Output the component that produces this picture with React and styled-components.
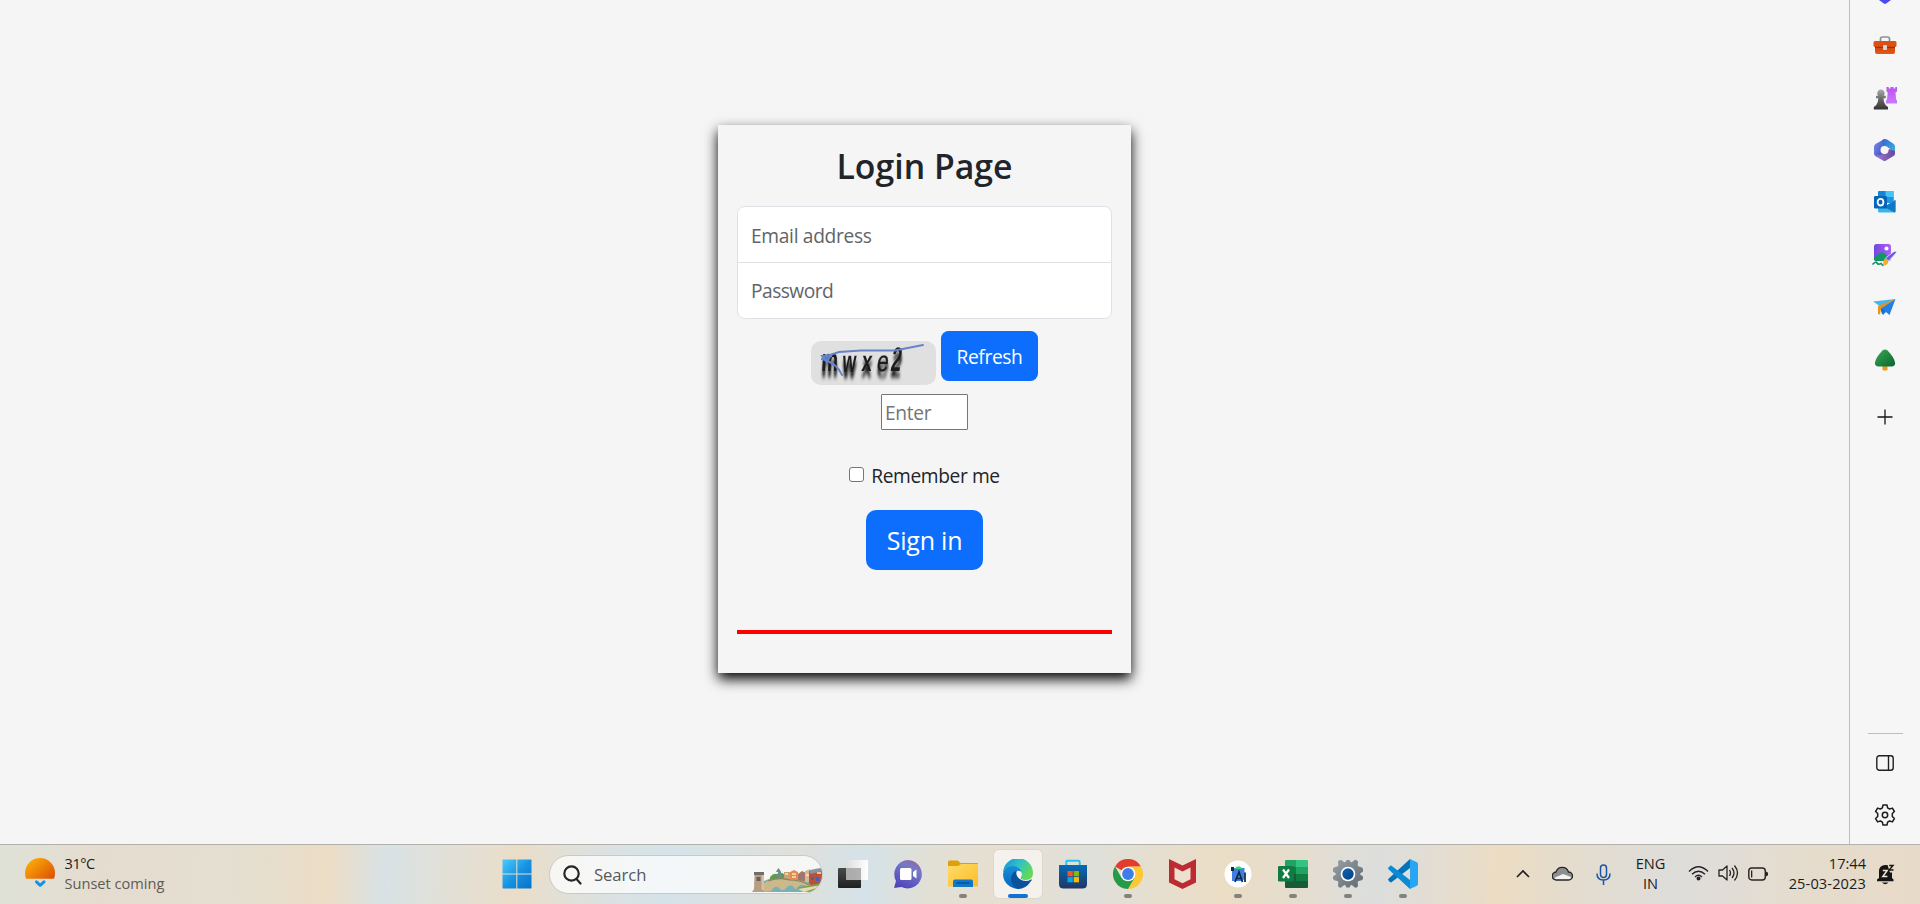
import React from "react";
import styled, { createGlobalStyle } from "styled-components";

const GlobalStyle = createGlobalStyle`
  *, *::before, *::after { box-sizing: border-box; }
  html, body, #root { height: 100%; margin: 0; }
  body {
    background: #f5f5f5;
    color: #212529;
    font-family: "Open Sans", "Noto Sans", sans-serif;
    letter-spacing: -0.019em;
    overflow: hidden;
  }
  input, button { font: inherit; letter-spacing: inherit; margin: 0; }
  svg { display: block; }
`;

const Desktop = styled.div`
  display: flex;
  flex-direction: column;
  width: 1920px;
  height: 904px;
`;

const BrowserWindow = styled.div`
  display: flex;
  flex: 1;
  min-height: 0;
`;

const Page = styled.main`
  display: flex;
  flex: 1;
  justify-content: center;
  align-items: flex-start;
  padding-top: 125px;
  background: #f5f5f5;
`;

/* ---------- login form ---------- */

const Card = styled.form`
  display: flex;
  flex-direction: column;
  align-items: center;
  width: 413px;
  height: 548px;
  padding: 20px 19px 0;
  background: #f5f5f5;
  box-shadow: 0 6.25px 12.5px #000;
`;

const Title = styled.h1`
  margin: 0 0 19px;
  font-size: 33.8px;
  font-weight: 600;
  letter-spacing: 0;
  line-height: 42px;
`;

const FieldGroup = styled.div`
  display: flex;
  flex-direction: column;
  align-self: stretch;
`;

const Field = styled.input`
  height: 57px;
  padding: ${(p) => (p.$last ? "0 13px 1px" : "1px 13px 0")};
  border: 1px solid #dee2e6;
  border-radius: ${(p) => (p.$last ? "0 0 7.5px 7.5px" : "7.5px 7.5px 0 0")};
  margin-top: ${(p) => (p.$last ? "-1px" : "0")};
  background: #fff;
  font-size: 19.2px;
  letter-spacing: ${(p) => (p.$last ? "-0.028em" : "-0.017em")};
  outline: none;
  &::placeholder { color: #5f6468; opacity: 1; }
`;

const CaptchaRow = styled.div`
  display: flex;
  align-items: flex-start;
  gap: 5px;
  height: 54px;
  margin-top: 12px;
`;

const CaptchaBox = styled.div`
  width: 125px;
  height: 44px;
  margin-top: 10px;
  border-radius: 10px;
  background: #e0e0e0;
  overflow: hidden;
`;

const Button = styled.button`
  width: ${(p) => (p.$large ? 117 : 97)}px;
  height: ${(p) => (p.$large ? 60 : 50)}px;
  padding: ${(p) => (p.$large ? "0" : "1px")} 0 0;
  border: 0;
  border-radius: ${(p) => (p.$large ? 10 : 7.5)}px;
  background: #0d6efd;
  color: #fff;
  font-size: ${(p) => (p.$large ? 25 : 19.2)}px;
  letter-spacing: ${(p) => (p.$large ? "-0.008em" : "-0.019em")};
  white-space: nowrap;
`;

const CaptchaInput = styled.input`
  width: 87px;
  height: 36px;
  margin-top: 9px;
  padding: 1px 3px 0;
  border: 1px solid #767676;
  border-radius: 1px;
  background: #fff;
  font-size: 19.2px;
  outline: none;
  &::placeholder { color: #757575; opacity: 1; }
`;

const Remember = styled.label`
  display: flex;
  align-items: center;
  gap: 7px;
  height: 30px;
  margin: 30px 0 20px;
  font-size: 19.2px;
  line-height: 30px;
`;

const RememberText = styled.span`
  padding-top: 2px;
  letter-spacing: -0.021em;
`;

const Checkbox = styled.input`
  appearance: none;
  width: 15px;
  height: 15px;
  margin: 0 0 1px;
  border: 1px solid #767676;
  border-radius: 3px;
  background: #fff;
`;

const Rule = styled.div`
  align-self: stretch;
  height: 4px;
  margin-top: 60px;
  background: #f00;
`;

/* ---------- browser sidebar ---------- */

const Sidebar = styled.aside`
  display: flex;
  flex-direction: column;
  justify-content: space-between;
  width: 71px;
  border-left: 1px solid #bdbdbd;
  background: #f6f6f6;
  overflow: hidden;
`;

const SideGroup = styled.div`
  display: flex;
  flex-direction: column;
  align-items: center;
  padding-bottom: ${(p) => p.$bottom || 0}px;
`;

const SideSlot = styled.div`
  display: flex;
  align-items: center;
  justify-content: center;
  width: 36px;
  height: ${(p) => p.$h || 52.4}px;
  padding-right: 1px;
`;

const SideDivider = styled.div`
  width: 35px;
  height: 1px;
  background: #bdbdbd;
`;

/* ---------- taskbar ---------- */

const Taskbar = styled.footer`
  display: flex;
  height: 60px;
  border-top: 1px solid #b3b1ac;
  color: #1c1c1c;
  font-size: 14.6px;
  letter-spacing: 0;
  background: linear-gradient(
    93deg,
    #dfe2d8 0px, #e5dccf 100px, #e3dfd0 240px, #ecdcc5 330px, #d8e2e5 385px,
    #e0e1db 430px, #eaddc8 520px, #dfe1dc 580px, #d5e3ea 665px, #dfe0da 790px,
    #d5e2e8 865px, #e2e0d6 930px, #e7dfd0 1000px, #dfe0da 1090px,
    #ebddc5 1220px, #e6ddcd 1290px, #dcdedd 1375px, #e2ddd3 1430px,
    #ecdcc3 1500px, #e3dccf 1580px, #dedddb 1680px, #e5dccd 1800px,
    #e8dac8 1920px
  );
`;

const Weather = styled.div`
  display: flex;
  width: 494px;
  padding: 10px 0 0 25px;
  gap: 9.5px;
`;

const Lines = styled.div`
  display: flex;
  flex-direction: column;
  align-items: ${(p) => p.$align || "flex-start"};
  margin-top: -2px;
  line-height: 20px;
  white-space: nowrap;
`;

const Temperature = styled.span`
  letter-spacing: -0.03em;
`;

const Muted = styled.span`
  color: #5e5b56;
  letter-spacing: 0;
`;

const Digits = styled.span`
  letter-spacing: ${(p) => p.$spacing || 0}px;
`;

const StartSlot = styled.div`
  display: flex;
  justify-content: center;
  width: 45px;
  padding-top: 14px;
`;

const SearchBox = styled.div`
  display: flex;
  align-items: center;
  width: 274px;
  height: 39px;
  margin: 10px 2px 0 10px;
  padding-left: 13px;
  border: 1px solid #c9cac6;
  border-radius: 20px;
  background: rgba(255, 255, 255, 0.72);
  color: #56585a;
  font-size: 16.7px;
  overflow: hidden;
`;

const SearchLabel = styled.span`
  flex: 1;
  margin-left: 12px;
  line-height: 24px;
  letter-spacing: -0.005em;
`;

const SearchArt = styled.div`
  margin: 1px -1px 0 0;
`;

const AppSlot = styled.div`
  display: flex;
  flex-direction: column;
  align-items: center;
  width: 55px;
  padding-top: 5px;
`;

const AppTile = styled.div`
  display: flex;
  align-items: center;
  justify-content: center;
  width: 48px;
  height: 48px;
  border-radius: 5px;
  background: ${(p) => (p.$active ? "rgba(247, 245, 241, 0.85)" : "transparent")};
  box-shadow: ${(p) => (p.$active ? "0 0 0 1px rgba(205, 200, 190, .35)" : "none")};
`;

const Indicator = styled.i`
  width: ${(p) => (p.$active ? 20 : 8)}px;
  height: 4px;
  margin-top: -4px;
  border-radius: 2px;
  background: ${(p) => (p.$active ? "#0c74d4" : p.$running ? "#84827c" : "transparent")};
`;

const Tray = styled.div`
  display: flex;
  flex: 1;
  justify-content: flex-end;
  padding-right: 26px;
`;

const TraySlot = styled.div`
  width: ${(p) => p.$w}px;
  margin-right: ${(p) => p.$gap || 0}px;
  padding-top: ${(p) => p.$top}px;
`;

/* ---------- icons ---------- */

const CaptchaArt = () => (
  <svg width="125" height="44" viewBox="0 0 125 44">
    <defs>
      <filter id="smear" filterUnits="userSpaceOnUse" x="0" y="0" width="125" height="44">
        <feGaussianBlur in="SourceAlpha" stdDeviation="1 2.6" result="b" />
        <feOffset in="b" dy="6" result="shade" />
        <feGaussianBlur in="SourceGraphic" stdDeviation="0.35" result="glyph" />
        <feMerge><feMergeNode in="shade" /><feMergeNode in="glyph" /></feMerge>
      </filter>
    </defs>
    <g fill="#1c1c1c" filter="url(#smear)" fontFamily="Liberation Sans, sans-serif" fontWeight="700" letterSpacing="0">
      <text transform="translate(10 30) skewX(-3) scale(.58 1)" fontSize="32">m</text>
      <text transform="translate(31 30.500) skewX(-4) scale(.56 1)" fontSize="31">w</text>
      <text transform="translate(50 30) skewX(-6) scale(.64 1)" fontSize="29">x</text>
      <text transform="translate(65 30) skewX(-8) scale(.72 1)" fontSize="29" fontWeight="400" stroke="#1c1c1c" strokeWidth=".4">e</text>
      <text transform="translate(79 30) skewX(-8) scale(.54 1)" fontSize="34">2</text>
    </g>
    <g fill="none" stroke="#6583c9" strokeWidth="1.900" strokeLinecap="round">
      <path d="M112 4L84 9.500H50L28 11Q20 13 11 18" />
      <path d="M11 18Q26 22 31 34" />
      <path d="M11 15l9-1-4 7z" fill="#5b7cc8" />
    </g>
  </svg>
);

const Gem = () => (
  <svg width="24" height="20" viewBox="0 0 24 20"><path d="M6 0h12l-4.500 3.200q-1.500 1.300-3 0z" fill="#4a48f5" /></svg>
);

const Toolbox = () => (
  <svg width="24" height="20" viewBox="0 0 24 20">
    <defs><linearGradient id="tb" x2="0" y2="1"><stop stopColor="#c94108" /><stop offset="1" stopColor="#e5581b" /></linearGradient></defs>
    <path d="M7.500 7V4q0-2 2-2h5q2 0 2 2v3" fill="none" stroke="#8a9191" strokeWidth="1.700" />
    <path d="M2 10h20v7q0 2-2 2H4q-2 0-2-2z" fill="url(#tb)" />
    <rect x=".5" y="6" width="23" height="6" rx="1.500" fill="#dd5011" />
    <path d="M2 11.800h20v1.200H2z" fill="#9c320a" />
    <rect x="10" y="10" width="4" height="5" rx="1" fill="#d4d7d7" />
  </svg>
);

const Chess = () => (
  <svg width="24" height="24" viewBox="0 0 24 24">
    <defs>
      <linearGradient id="pawn" x2="0" y2="1"><stop stopColor="#aaa" /><stop offset=".5" stopColor="#666" /><stop offset="1" stopColor="#333" /></linearGradient>
      <linearGradient id="rook" x2="0" y2="1"><stop stopColor="#b954ee" /><stop offset="1" stopColor="#cc78ff" /></linearGradient>
    </defs>
    <path d="M13.500 1h2.200v1.500h1.800V1h3v1.500h1.800V1H24v4.500L22.500 6.500l.6 7 .9 1v3H13v-3l1-1 .7-7-1.200-1z" fill="url(#rook)" />
    <path d="M8 3.500a3.700 3.700 0 0 1 2.700 6.200h2.100v2.500h-2.300q0 4.500 2.200 7l2.300 1.800v2.500H.8V21l2.300-1.800q2.200-2.500 2.200-7H3V9.700h2.200A3.700 3.700 0 0 1 8 3.500z" fill="url(#pawn)" />
  </svg>
);

const M365 = () => (
  <svg width="23" height="24" viewBox="0 0 23 24">
    <defs>
      <linearGradient id="ma" x2="1" y2="1"><stop stopColor="#7d8ff0" /><stop offset="1" stopColor="#3944af" /></linearGradient>
      <linearGradient id="mb" x2="1" y2="1"><stop stopColor="#3c63c9" /><stop offset="1" stopColor="#38b9e9" /></linearGradient>
      <linearGradient id="mc" x2="1" y2="0"><stop stopColor="#a877d2" /><stop offset="1" stopColor="#66499b" /></linearGradient>
    </defs>
    <path d="M11.500 1L2.500 6Q1 7 1 8.500v7Q1 17 2.500 18l8 3V5z" fill="url(#ma)" />
    <path d="M9 2.300Q11.500.2 14 1.500l6.500 4.300Q22 7 22 8.500V15l-6-5-7-1z" fill="url(#mb)" />
    <path d="M22 13v2.500q0 1.500-1.500 2.500L13 22.500q-1.500 1-3 0l-7-4Q2 18 1.500 17q4 1.500 8-1l7-5z" fill="url(#mc)" />
    <circle cx="11.500" cy="12" r="4" fill="#f6f6f6" />
  </svg>
);

const Outlook = () => (
  <svg width="22" height="22" viewBox="0 0 22 22">
    <path d="M4 1q0-1 1-1h14.500v12H4z" fill="#1286d2" />
    <path d="M11.500 0h8v6h-8z" fill="#45c3f2" /><path d="M11.500 6h8v6h-8z" fill="#2095df" />
    <path d="M4 10l9 4 8.500-5v11q0 1.500-1.500 1.500H5.500Q4 21.500 4 20z" fill="#35b7ea" />
    <path d="M10 16l11.500-7v11q0 1-.7 1.500z" fill="#1477c4" />
    <rect y="5" width="13" height="12.500" rx="1.300" fill="#0765b8" />
    <ellipse cx="6.500" cy="11.200" rx="2.900" ry="3.300" fill="none" stroke="#fff" strokeWidth="1.800" />
  </svg>
);

const ImageCreator = () => (
  <svg width="25" height="24" viewBox="0 0 25 24">
    <defs><linearGradient id="ic" x2="1"><stop stopColor="#7248de" /><stop offset="1" stopColor="#ad62f6" /></linearGradient></defs>
    <rect x="2" y="1" width="17" height="17" rx="2.500" fill="url(#ic)" />
    <path d="M2 14l6-4q2-1.500 4 0l5 4-3 4H4.500Q2 18 2 15.500z" fill="#139568" />
    <circle cx="14.500" cy="5.500" r="2" fill="#fff" />
    <path d="M.5 19.500h12V24H.5z" fill="#f6f6f6" />
    <path d="M1 21q3-3 4-1t4 .5l2 2" fill="none" stroke="#129365" strokeWidth="1.700" strokeLinecap="round" />
    <path d="M22 8.500q2-.8 2.500.7-.5 1.300-8 8.800l-3-3z" fill="#6a5ce8" stroke="#f6f6f6" strokeWidth=".7" />
    <path d="M13 15.500l3.500 3q-.5 4-6 4.200 1-1 .7-3 .2-3 1.800-4.200z" fill="#f5ae25" />
  </svg>
);

const PaperPlane = () => (
  <svg width="23" height="18" viewBox="0 0 23 18">
    <path d="M0 3.500L22.500 1 8 9z" fill="#47b5f3" />
    <path d="M22.500 1L16.500 17l-3.500-3-3 3-3-7z" fill="#237ee6" />
    <path d="M22.500 1L5 8v8l2 .5 1-6z" fill="#e99412" />
    <path d="M8 10.500l1 6 3-4z" fill="#1969c8" />
  </svg>
);

const Tree = () => (
  <svg width="22" height="22" viewBox="0 0 22 22">
    <defs><linearGradient id="tr" x2="1" y2="1"><stop stopColor="#3dab55" /><stop offset="1" stopColor="#07642f" /></linearGradient></defs>
    <path d="M8.500 15h5v6q-2.500 1-5 0z" fill="#eb9920" />
    <path d="M8.500 1.500Q11-.6 13.500 1.500 20 8 21 13.500 21.500 17.500 17.500 17.500h-13Q.5 17.500 1 13.500 2 8 8.500 1.500z" fill="url(#tr)" />
  </svg>
);

const Plus = () => (
  <svg width="16" height="16" viewBox="0 0 16 16"><path d="M8 .5v15M.5 8h15" stroke="#151515" strokeWidth="1.300" /></svg>
);

const PanelIcon = () => (
  <svg width="18" height="16" viewBox="0 0 18 16" fill="none" stroke="#202020" strokeWidth="1.400">
    <rect x=".8" y=".8" width="16.400" height="14.400" rx="2.500" /><path d="M12.500 1v14" />
  </svg>
);

const Gear = () => (
  <svg width="22" height="22" viewBox="0 0 22 22" fill="none" stroke="#1d1d1d" strokeWidth="1.500" strokeLinejoin="round">
    <path d="M9 1h4l.6 2.800 2 1.200 2.800-.9 2 3.400L18.300 9.500v3l2.100 2-2 3.400-2.800-.9-2 1.200L13 21H9l-.6-2.800-2-1.200-2.800.9-2-3.400 2.100-2v-3l-2.100-2 2-3.400 2.800.9 2-1.200z" />
    <circle cx="11" cy="11" r="2.700" />
  </svg>
);

const Sunset = () => (
  <svg width="30" height="32" viewBox="0 0 30 32">
    <defs><linearGradient id="sun" x1="0" y1="0" x2="1" y2=".8"><stop stopColor="#fbb507" /><stop offset=".4" stopColor="#f39208" /><stop offset="1" stopColor="#df5604" /></linearGradient></defs>
    <path d="M1 23.800Q0 21 0 18a15 15 0 0 1 30 0q0 3-1 5.800z" fill="url(#sun)" />
    <path d="M11.500 26.800l3.700 3.500 3.800-3.500" fill="none" stroke="#1594e4" strokeWidth="3" strokeLinecap="round" strokeLinejoin="round" />
  </svg>
);

const WindowsLogo = () => (
  <svg width="30" height="30" viewBox="0 0 30 30">
    <defs><linearGradient id="win" gradientUnits="userSpaceOnUse" x1="0" y1="0" x2="30" y2="30"><stop stopColor="#4dcdfd" /><stop offset=".5" stopColor="#1794e2" /><stop offset="1" stopColor="#0670ca" /></linearGradient></defs>
    <path d="M1 .5h13.300v14H.5V1zM15.300.5H29l.5.5v13.500H15.300zM.5 15.500h13.800v14H1l-.5-.5zM15.300 15.500h14.200V29l-.5.5H15.300z" fill="url(#win)" />
  </svg>
);

const Magnifier = () => (
  <svg width="19" height="20" viewBox="0 0 19 20" fill="none" stroke="#262626" strokeWidth="2.200" strokeLinecap="round">
    <circle cx="8.500" cy="8.500" r="7.200" /><path d="M13.500 14l4 4.500" />
  </svg>
);

const CityArt = () => (
  <svg width="71" height="37" viewBox="0 0 71 37">
    <path d="M12 35V24l12-5 47 1v15z" fill="#78b0b5" />
    <path d="M18 20q3-4 7-3 3-3 7 0 8-3 14 0l-2 8H18z" fill="#5f9a53" />
    <path d="M26 20v-5h-2l1-2 1.500-2 1.500 2 1 2v5z" fill="#69908a" />
    <path d="M32 15h7v7h-7z" fill="#c9a26d" /><path d="M38 15l4-2 4 2v8h-8z" fill="#e58b52" />
    <path d="M46 17l4-3 4 2v8h-8z" fill="#9f786d" /><path d="M53 14l5-2v13h-5z" fill="#d9b792" />
    <path d="M57 14l14-2v17H57z" fill="#b7533d" /><path d="M58 13l10-2 3 1v2l-13 3z" fill="#8d949f" />
    <path d="M59 20h3v3h-3zM64 20h3v4h-3z" fill="#4262bd" />
    <path d="M33 17h3M40 17h4M40 20h4M54 18h3M65 16h4" stroke="#fbe6b8" strokeWidth="1.300" />
    <path d="M11 27q10-8 24-4 14-1 24 5l-3 2q-5-4-9-1l-2 3h-2q-4-7-9-1l-2 2h-3q-5-7-10 1l-8 1z" fill="#cbb98b" />
    <path d="M16 24q12-4 21-1 12 0 20 5" fill="none" stroke="#8b8260" strokeWidth="1.200" />
    <path d="M44 31l26-5v6l-12 3z" fill="#7da34d" /><path d="M46 32l24-4v1l-18 6z" fill="#e8dab2" />
    <path d="M2.500 17l1-1h7l1 1v16l1 2H0l2-3z" fill="#b79d83" /><path d="M2 15h10v3H2z" fill="#746a66" />
    <path d="M4.500 20h4v4h-4z" fill="#64605f" /><path d="M9.500 18h2.500v15H9.500z" fill="#d9c0a0" />
  </svg>
);

const TaskView = () => (
  <svg width="30" height="30" viewBox="0 0 30 30">
    <defs>
      <linearGradient id="tvd" x2="0" y2="1"><stop stopColor="#4a4a4a" /><stop offset="1" stopColor="#202020" /></linearGradient>
      <linearGradient id="tvl" x2="1"><stop stopColor="#ddd" /><stop offset="1" stopColor="#fff" /></linearGradient>
    </defs>
    <rect y="9" width="23" height="20" rx="1" fill="url(#tvd)" />
    <rect x="8" y="1" width="22" height="20" rx="1" fill="url(#tvl)" />
    <path d="M8 9h15v12H8z" fill="#999" opacity=".75" />
  </svg>
);

const Chat = () => (
  <svg width="30" height="30" viewBox="0 0 30 30">
    <defs><linearGradient id="ch" x1=".8" x2=".3" y2="1"><stop stopColor="#96639f" /><stop offset=".3" stopColor="#7479c7" /><stop offset="1" stopColor="#4f46ba" /></linearGradient></defs>
    <path d="M15 1a14.200 14.200 0 1 1-6.500 27L1 29l2-7A14.200 14.200 0 0 1 15 1z" fill="url(#ch)" />
    <rect x="7" y="9" width="11.500" height="12" rx="1.500" fill="#fff" /><path d="M20 13l3.500-2.500v9L20 17z" fill="#fff" />
  </svg>
);

const Folder = () => (
  <svg width="30" height="30" viewBox="0 0 30 30">
    <defs><linearGradient id="fo" x2="1" y2="1"><stop stopColor="#ffdb6b" /><stop offset="1" stopColor="#fbbd24" /></linearGradient></defs>
    <path d="M0 3q0-1.500 1.500-1.500H9q1 0 2 1.200L12.500 4H29q1 0 1 1v4H0z" fill="#dea006" />
    <path d="M0 7h10l3-2h17v22.500H0z" fill="url(#fo)" />
    <path d="M5 28v-5.500Q5 20.500 7 20.500h16q2 0 2 2V28z" fill="#0f78cc" />
    <path d="M9 24h12" stroke="#07508e" strokeWidth="1.400" strokeLinecap="round" />
  </svg>
);

const Edge = () => (
  <svg width="30" height="30" viewBox="0 0 30 30">
    <defs>
      <linearGradient id="e1" x2="1" y2=".5"><stop stopColor="#168ccd" /><stop offset=".5" stopColor="#2cc0cd" /><stop offset="1" stopColor="#62d957" /></linearGradient>
      <linearGradient id="e2" x2="0" y2="1"><stop stopColor="#168fd8" /><stop offset="1" stopColor="#0864bb" /></linearGradient>
    </defs>
    <path d="M0 14A15 15 0 0 1 30 14q0 7-7 7-6 0-5.500-2.500 2-2 1-5.500Q15 6 8 8 2 9.500 0 14z" fill="url(#e1)" />
    <path d="M0 15Q2 7 10 7q7 0 9 7-1.500-3-5.500-2Q7 16 10.500 24q2 4 7 5.500Q13 31 7 27.500 0 23 0 15z" fill="url(#e2)" />
    <path d="M9 16q1.500-4 5-4-2 4 2 7.500 6 4.500 12 1Q30 20 28 22q-5 8-13 8-7-3-7-10 0-2 1-4z" fill="#0a529c" />
    <path d="M14 12q4 0 4.500 3.500 0 1.500-1 3-.5 1 1 1.800Q13 18 14 12z" fill="#f6f4ef" />
  </svg>
);

const Store = () => (
  <svg width="30" height="30" viewBox="0 0 30 30">
    <defs><linearGradient id="st" x2="0" y2="1"><stop stopColor="#066bb5" /><stop offset="1" stopColor="#213564" /></linearGradient></defs>
    <path d="M8.300 7V3q0-1.300 1.300-1.300h10.800q1.300 0 1.300 1.300v4" fill="none" stroke="#20c3ef" strokeWidth="1.900" />
    <path d="M1 6h28v19q0 4.500-4.500 4.500h-19Q1 29.500 1 25z" fill="url(#st)" />
    <path d="M9.500 12h5.300v5.300H9.500z" fill="#f2562b" /><path d="M15.700 12H21v5.300h-5.300z" fill="#80bb0a" />
    <path d="M9.500 18.100h5.300v5.200H9.500z" fill="#04a6ed" /><path d="M15.700 18.100H21v5.200h-5.300z" fill="#fdb80a" />
  </svg>
);

const Chrome = () => (
  <svg width="30" height="30" viewBox="0 0 30 30">
    <path d="M15 15L2 7.500A15 15 0 0 1 28 7.500L15 8z" fill="#e33b2e" />
    <path d="M28 7.500A15 15 0 0 1 15 30l6.500-11.500L15 7.500z" fill="#fcc934" />
    <path d="M2 7.500A15 15 0 0 0 15 30l6.500-11.300L15 15 8.500 18.700z" fill="#259a49" />
    <circle cx="15" cy="15" r="7.300" fill="#fff" /><circle cx="15" cy="15" r="5.900" fill="#3b7eea" />
  </svg>
);

const McAfee = () => (
  <svg width="27" height="30" viewBox="0 0 27 30">
    <path d="M0 0l13.500 6.500L27 0v23.500L13.500 30 0 23.500z" fill="#bd2b32" />
    <path d="M5.500 8.500l8 4 8-4v11.700l-8 4-8-4z" fill="#ede0cf" />
  </svg>
);

const AndroidStudio = () => (
  <svg width="28" height="28" viewBox="0 0 28 28">
    <circle cx="14" cy="14" r="13.500" fill="#fff" />
    <path d="M8 8h12.500v11l-3 2H8z" fill="#437de0" />
    <path d="M10 9q4.500-5.500 9 0z" fill="#3bd17d" />
    <path d="M7 7h3v4H7z" fill="#073042" />
    <path d="M11 22l4-10 3.500 10M12.800 18.500h4.500M21 12.500V22" stroke="#082a43" strokeWidth="1.700" fill="none" />
  </svg>
);

const Excel = () => (
  <svg width="30" height="30" viewBox="0 0 30 30">
    <path d="M7 2q0-1 1-1h11v7H7z" fill="#21a366" /><path d="M18 1h11q1 0 1 1v6H18z" fill="#33c481" />
    <path d="M7 8h11v7H7z" fill="#107c41" /><path d="M18 8h12v7H18z" fill="#21a366" />
    <path d="M7 15h11v7H7z" fill="#185c37" /><path d="M18 15h12v7H18z" fill="#107c41" />
    <path d="M7 22h23v6q0 1-1 1H8q-1 0-1-1z" fill="#185c37" />
    <rect y="7" width="16" height="15.500" rx="1.200" fill="#107c41" />
    <path d="M5 10.500l6 8.500M11 10.500L5 19" stroke="#fff" strokeWidth="2.200" />
  </svg>
);

const Settings = () => (
  <svg width="30" height="30" viewBox="0 0 30 30">
    <defs>
      <linearGradient id="se" x2="1" y2="1"><stop stopColor="#98a0a6" /><stop offset="1" stopColor="#616a72" /></linearGradient>
      <linearGradient id="sb" x2="1" y2="1"><stop stopColor="#0d65b5" /><stop offset="1" stopColor="#073f7c" /></linearGradient>
    </defs>
    <path d="M6 1.500q1-1 2.300-.4l2.900 2.100q1 .4 1.500-.7l1-1.500h2.600l1 1.500q.5 1.100 1.500.7L21.700 1Q23 .5 24 1.500l1 1-.3 3.700q0 1.400 1.300 1.400l3 1q1 .7 1 2v2l-2.500 1.700q-1 .7 0 1.500L30 17.500v2q-.2 1.300-1.300 1.700l-3 .7q-1.200.4-1 1.600l.3 3.500-1 1.300q-1 .8-2 .3l-3-2.400q-1.200-.6-1.600.6l-.8 1.700h-3.200l-.8-1.700q-.4-1.200-1.600-.6l-3 2.400q-1 .5-2-.3L5 27l.3-3.500q.2-1.200-1-1.600l-3-.7Q.2 20.800 0 19.500v-2l2.500-1.800q1-.8 0-1.500L0 12.500v-2q0-1.300 1-2l3-1q1.300 0 1.300-1.400L5 2.500z" fill="url(#se)" />
    <circle cx="15" cy="15" r="7.300" fill="#fff" /><circle cx="15" cy="15" r="5.700" fill="url(#sb)" />
  </svg>
);

const VSCode = () => (
  <svg width="30" height="30" viewBox="0 0 30 30">
    <path d="M22 0v9L3.500 23.200Q2.700 23.800 2 23l-1.500-1.500q-.8-1 0-1.700z" fill="#0573b8" />
    <path d="M22 30v-9L3.500 6.800Q2.700 6.200 2 7L.5 8.500q-.8 1 0 1.700z" fill="#0a8bd5" />
    <path d="M22 0l7 3.300Q30 4 30 5v20q0 1-1 1.700L22 30z" fill="#29a6f3" />
  </svg>
);

const Chevron = () => (
  <svg width="14" height="10" viewBox="0 0 14 10"><path d="M1 8l6-6 6 6" fill="none" stroke="#1e1e1e" strokeWidth="1.600" /></svg>
);

const Cloud = () => (
  <svg width="21" height="15" viewBox="0 0 21 15">
    <path d="M4.500 14A4 4 0 0 1 4 6a6.500 6.500 0 0 1 12.500 0 4 4 0 0 1 0 8z" fill="#8d9090" />
    <path d="M2 12l9-4 8 3q-.5 3-3 3h-11z" fill="#f4f4f2" />
    <path d="M4.500 14A4 4 0 0 1 4 6a6.500 6.500 0 0 1 12.500 0 4 4 0 0 1 0 8z" fill="none" stroke="#252525" strokeWidth="1.300" />
  </svg>
);

const Mic = () => (
  <svg width="15" height="21" viewBox="0 0 15 21" fill="none" stroke="#1d53a4" strokeWidth="1.500">
    <rect x="4.500" y="1" width="6" height="12.500" rx="3" /><path d="M1 9.500q0 6.500 6.500 6.500T14 9.500M7.500 16v5" />
  </svg>
);

const Wifi = () => (
  <svg width="21" height="16" viewBox="0 0 21 16" fill="none" stroke="#242424" strokeWidth="1.400">
    <path d="M1 6.500q9.500-9.500 19 0M4 9.300q6.500-6.300 13 0M7 12q3.500-3.300 7 0" /><circle cx="10.500" cy="13.600" r="1.300" fill="#242424" />
  </svg>
);

const Speaker = () => (
  <svg width="21" height="18" viewBox="0 0 21 18" fill="none" stroke="#242424" strokeWidth="1.300" strokeLinejoin="round">
    <path d="M1 6h3.500L9 2v14l-4.500-4H1z" /><path d="M11.500 6q2 3 0 6M14 4q4 5 0 10M16.500 1.500q6 7.500 0 15" />
  </svg>
);

const Battery = () => (
  <svg width="21" height="14" viewBox="0 0 21 14">
    <rect x=".8" y="1" width="16.500" height="12" rx="3" fill="none" stroke="#242424" strokeWidth="1.400" />
    <path d="M3 3.500h1.300v7H3zM18 4.500l2 1.300v2.400L18 9.500z" fill="#242424" />
  </svg>
);

const Bell = () => (
  <svg width="18" height="21" viewBox="0 0 18 21">
    <path d="M2 14V7.500Q2 1 8.500 1h2l2.500 7.500h2V14l1.500 1.500v1.700H0v-1.700z" fill="#151515" /><path d="M5 18.500h6.500q-3.200 3.300-6.500 0z" fill="#151515" />
    <path d="M5.800 6.500h4.400l-4.400 6h4.600" fill="none" stroke="#eee5d8" strokeWidth="1.500" />
    <path d="M12.200 1.500h3.800L12.200 6h4.300" fill="none" stroke="#151515" strokeWidth="1.400" />
  </svg>
);

const sidebarApps = [Toolbox, Chess, M365, Outlook, ImageCreator, PaperPlane, Tree];

const taskbarApps = [
  { Icon: TaskView },
  { Icon: Chat },
  { Icon: Folder, running: true },
  { Icon: Edge, active: true },
  { Icon: Store },
  { Icon: Chrome, running: true },
  { Icon: McAfee },
  { Icon: AndroidStudio, running: true },
  { Icon: Excel, running: true },
  { Icon: Settings, running: true },
  { Icon: VSCode, running: true },
];

function LoginForm() {
  return (
    <Card onSubmit={(e) => e.preventDefault()}>
      <Title>Login Page</Title>
      <FieldGroup>
        <Field type="email" placeholder="Email address" />
        <Field type="password" placeholder="Password" $last />
      </FieldGroup>
      <CaptchaRow>
        <CaptchaBox><CaptchaArt /></CaptchaBox>
        <Button type="button">Refresh</Button>
      </CaptchaRow>
      <CaptchaInput placeholder="Enter" />
      <Remember><Checkbox type="checkbox" /><RememberText>Remember me</RememberText></Remember>
      <Button type="submit" $large>Sign in</Button>
      <Rule />
    </Card>
  );
}

export default function App() {
  return (
    <Desktop>
      <GlobalStyle />
      <BrowserWindow>
        <Page><LoginForm /></Page>
        <Sidebar>
          <SideGroup>
            <SideSlot $h={19}><Gem /></SideSlot>
            {sidebarApps.map((Icon, i) => <SideSlot key={i}><Icon /></SideSlot>)}
            <SideSlot $h={63}><Plus /></SideSlot>
          </SideGroup>
          <SideGroup $bottom={6}>
            <SideDivider />
            <SideSlot $h={58}><PanelIcon /></SideSlot>
            <SideSlot $h={46}><Gear /></SideSlot>
          </SideGroup>
        </Sidebar>
      </BrowserWindow>
      <Taskbar>
        <Weather>
          <Sunset />
          <Lines><Temperature>31°C</Temperature><Muted>Sunset coming</Muted></Lines>
        </Weather>
        <StartSlot><WindowsLogo /></StartSlot>
        <SearchBox><Magnifier /><SearchLabel>Search</SearchLabel><SearchArt><CityArt /></SearchArt></SearchBox>
        {taskbarApps.map(({ Icon, active, running }, i) => (
          <AppSlot key={i}>
            <AppTile $active={active}><Icon /></AppTile>
            <Indicator $active={active} $running={running} />
          </AppSlot>
        ))}
        <Tray>
          <TraySlot $w={14} $gap={22} $top={24}><Chevron /></TraySlot>
          <TraySlot $w={21} $gap={23} $top={21}><Cloud /></TraySlot>
          <TraySlot $w={15} $gap={23} $top={19}><Mic /></TraySlot>
          <TraySlot $w={33} $gap={21} $top={10}><Lines $align="center"><span>ENG</span><span>IN</span></Lines></TraySlot>
          <TraySlot $w={21} $gap={9} $top={20}><Wifi /></TraySlot>
          <TraySlot $w={21} $gap={9} $top={19}><Speaker /></TraySlot>
          <TraySlot $w={21} $gap={14} $top={22}><Battery /></TraySlot>
          <TraySlot $w={83} $gap={11} $top={10}><Lines $align="flex-end"><Digits>17:44</Digits><Digits $spacing={0.12}>25-03-2023</Digits></Lines></TraySlot>
          <TraySlot $w={17} $top={19}><Bell /></TraySlot>
        </Tray>
      </Taskbar>
    </Desktop>
  );
}
